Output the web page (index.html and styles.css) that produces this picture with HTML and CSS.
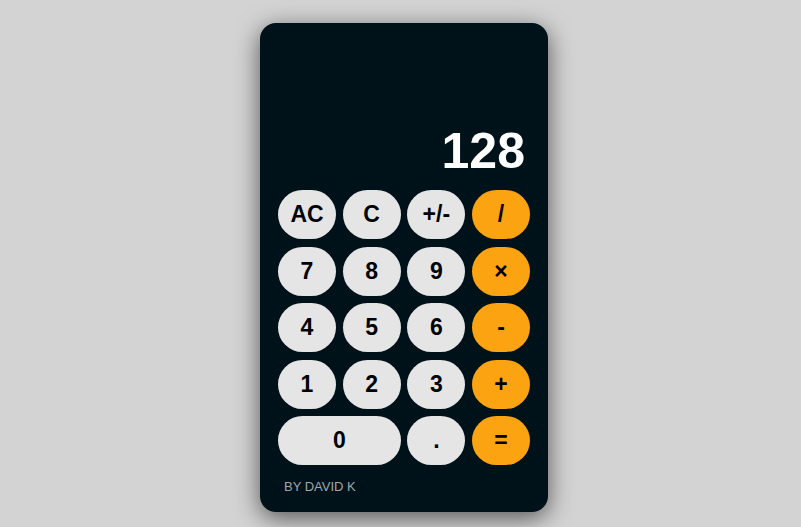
FILE: index.html
```html
<!DOCTYPE html>
<html>
<head>
<meta charset="utf-8">
<link rel="stylesheet" href="styles.css">
</head>
<body>
<div class="calc">
  <div class="display">128</div>
  <div class="keys">
    <button class="key">AC</button>
    <button class="key">C</button>
    <button class="key">+/-</button>
    <button class="key op">/</button>
    <button class="key">7</button>
    <button class="key">8</button>
    <button class="key">9</button>
    <button class="key op">×</button>
    <button class="key">4</button>
    <button class="key">5</button>
    <button class="key">6</button>
    <button class="key op">-</button>
    <button class="key">1</button>
    <button class="key">2</button>
    <button class="key">3</button>
    <button class="key op">+</button>
    <button class="key zero">0</button>
    <button class="key">.</button>
    <button class="key op">=</button>
  </div>
  <div class="footer">BY DAVID K</div>
</div>
</body>
</html>
```

FILE: styles.css
```css
html, body {
  margin: 0;
  height: 100%;
}
body {
  background: #d3d3d3;
  display: flex;
  justify-content: center;
  align-items: flex-start;
  padding: 23px 0 0 7px;
  box-sizing: border-box;
  font-family: "Liberation Sans", Arial, sans-serif;
}
.calc {
  width: 288px;
  height: 489px;
  box-sizing: border-box;
  background: #001219;
  border-radius: 16px;
  padding: 18px 18px 0 18px;
  box-shadow: 0 6px 24px rgba(0, 0, 0, 0.6);
  display: flex;
  flex-direction: column;
}
.display {
  height: 149px;
  box-sizing: border-box;
  padding: 0 5px 10px 0;
  display: flex;
  align-items: flex-end;
  justify-content: flex-end;
  color: #ffffff;
  font-weight: bold;
  font-size: 50px;
}
.keys {
  display: grid;
  grid-template-columns: repeat(4, 1fr);
  grid-auto-rows: 49px;
  column-gap: 6.67px;
  row-gap: 7.5px;
}
.key {
  border: none;
  margin: 0;
  padding: 0;
  border-radius: 999px;
  background: #e5e5e5;
  color: #000000;
  font-family: "Liberation Sans", Arial, sans-serif;
  font-weight: bold;
  font-size: 23px;
}
.key.op {
  background: #fca311;
}
.key.zero {
  grid-column: span 2;
}
.footer {
  margin-top: 14px;
  padding-left: 6px;
  color: #a0a7aa;
  font-size: 13px;
}
```
